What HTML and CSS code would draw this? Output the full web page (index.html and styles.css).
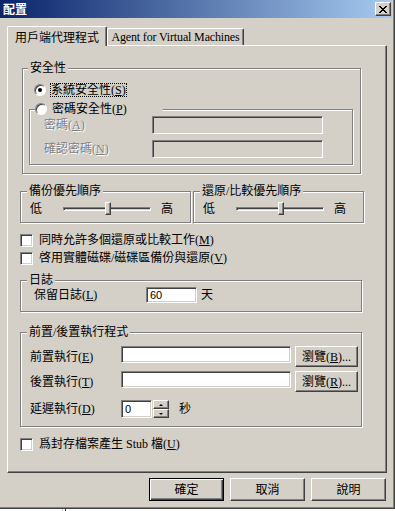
FILE: index.html
```html
<!DOCTYPE html>
<html lang="zh-Hant">
<head>
    <meta charset="UTF-8">
    <title>配置</title>
    <link rel="stylesheet" href="styles.css">
</head>
<body>
<div class="window">
    <div class="titlebar">
        <span class="title">配置</span>
        <span class="close">
            <svg width="8" height="7" viewBox="0 0 8 7"><path d="M0 0h2v1H0zM6 0h2v1H6zM1 1h2v1H1zM5 1h2v1H5zM2 2h4v1H2zM3 3h2v1H3zM2 4h4v1H2zM1 5h2v1H1zM5 5h2v1H5zM0 6h2v1H0zM6 6h2v1H6z" fill="#000"/></svg>
        </span>
    </div>

    <div class="tabs">
        <div class="tab active">用戶端代理程式</div>
        <div class="tab latin">Agent for Virtual Machines</div>
    </div>

    <div class="panel">
        <div class="group security">
            <div class="group-title">安全性</div>
            <div class="radio-row first">
                <span class="radio checked"></span>
                <span class="focus">系統安全性(<u>S</u>)</span>
            </div>
            <div class="group subgroup">
                <div class="radio-row legend">
                    <span class="radio"></span>
                    <span class="radio-text">密碼安全性(<u>P</u>)</span>
                </div>
                <div class="field-row">
                    <span class="field-label disabled">密碼(<u>A</u>)</span>
                    <span class="textbox off"></span>
                </div>
                <div class="field-row second">
                    <span class="field-label disabled">確認密碼(<u>N</u>)</span>
                    <span class="textbox off"></span>
                </div>
            </div>
        </div>

        <div class="priority-row">
            <div class="group priority">
                <div class="group-title">備份優先順序</div>
                <div class="slider-row">
                    <span>低</span>
                    <span class="track"><span class="thumb"></span></span>
                    <span class="high">高</span>
                </div>
            </div>
            <div class="group priority">
                <div class="group-title">還原/比較優先順序</div>
                <div class="slider-row">
                    <span>低</span>
                    <span class="track"><span class="thumb"></span></span>
                    <span class="high">高</span>
                </div>
            </div>
        </div>

        <div class="check-row cb-first">
            <span class="checkbox"></span>
            <span class="check-text">同時允許多個還原或比較工作(<u>M</u>)</span>
        </div>
        <div class="check-row cb-second">
            <span class="checkbox"></span>
            <span class="check-text">啓用實體磁碟/磁碟區備份與還原(<u>V</u>)</span>
        </div>

        <div class="group log">
            <div class="group-title">日誌</div>
            <div class="log-row">
                <span class="log-label">保留日誌(<u>L</u>)</span>
                <span class="textbox days">60</span>
                <span class="unit">天</span>
            </div>
        </div>

        <div class="group exec">
            <div class="group-title">前置/後置執行程式</div>
            <div class="exec-row">
                <span class="exec-label">前置執行(<u>E</u>)</span>
                <span class="textbox path"></span>
                <span class="button browse">瀏覽(<u>B</u>)...</span>
            </div>
            <div class="exec-row second">
                <span class="exec-label">後置執行(<u>T</u>)</span>
                <span class="textbox path"></span>
                <span class="button browse">瀏覽(<u>R</u>)...</span>
            </div>
            <div class="exec-row delay">
                <span class="exec-label">延遲執行(<u>D</u>)</span>
                <span class="textbox seconds">0</span>
                <span class="spinner">
                    <span class="spin up"></span>
                    <span class="spin down"></span>
                </span>
                <span class="unit sec">秒</span>
            </div>
        </div>

        <div class="check-row cb-stub">
            <span class="checkbox"></span>
            <span class="check-text">爲封存檔案產生 Stub 檔(<u>U</u>)</span>
        </div>
    </div>

    <div class="buttons">
        <span class="button default">確定</span>
        <span class="button">取消</span>
        <span class="button">說明</span>
    </div>
</div>
<div class="below"><span class="mark"></span></div>
</body>
</html>
```

FILE: styles.css
```css
body {
    margin: 0;
    background: #fff;
    font: 12px/14px "Liberation Serif", "Noto Sans CJK TC", serif;
    color: #000;
    overflow: hidden;
}
u {
    text-decoration: underline;
    text-underline-offset: 1px;
}

/* ventana */
.window {
    width: 395px;
    height: 509px;
    box-sizing: border-box;
    background: #d4d0c8;
    border-right: 1px solid #404040;
    border-bottom: 1px solid #404040;
    box-shadow: inset -1px -1px #808080;
}
.titlebar {
    width: 392px;
    height: 18px;
    box-sizing: border-box;
    padding-left: 3px;
    display: flex;
    align-items: center;
    justify-content: space-between;
    background: linear-gradient(to right, #0a246a, #a6caf0);
}
.title {
    color: #fff;
    font-weight: bold;
    font-family: "Noto Sans CJK TC", sans-serif;
    height: 14px;
}
.close {
    width: 16px;
    height: 14px;
    box-sizing: border-box;
    margin-right: 1px;
    display: flex;
    align-items: center;
    justify-content: center;
    background: #d4d0c8;
    border: 1px solid;
    border-color: #fff #404040 #404040 #fff;
    box-shadow: inset -1px -1px #808080;
}

/* pestañas */
.tabs {
    display: flex;
    align-items: flex-end;
    margin: 8px 0 0 7px;
    height: 20px;
}
.tab {
    box-sizing: border-box;
    background: #d4d0c8;
    border-top: 1px solid #fff;
    border-left: 1px solid #fff;
    border-right: 1px solid #404040;
    box-shadow: inset -1px 0 #808080;
    border-radius: 2px 2px 0 0;
    text-align: center;
    white-space: nowrap;
    width: 137px;
    height: 17px;
    margin-bottom: 1px;
    padding-top: 1px;
}
.tab.latin {
    letter-spacing: -0.15px;
}
.tab.active {
    width: 100px;
    height: 20px;
    margin-bottom: 0;
    padding-top: 4px;
    position: relative;
    z-index: 1;
}
.panel {
    margin: -1px 0 0 7px;
    width: 380px;
    height: 428px;
    box-sizing: border-box;
    padding-left: 12px;
    border-top: 1px solid #fff;
    border-left: 1px solid #fff;
    border-right: 1px solid #404040;
    border-bottom: 1px solid #404040;
    box-shadow: inset -1px -1px #808080;
    overflow: hidden;
}

/* grupos */
.group {
    box-sizing: border-box;
    border: 1px solid #808080;
    box-shadow: inset 1px 1px #fff, 1px 1px #fff;
}
.group-title {
    width: fit-content;
    height: 14px;
    margin: -8px 0 0 6px;
    padding: 0 2px;
    background: #d4d0c8;
    white-space: nowrap;
}
.security {
    margin: 22px 0 0 2px;
    width: 339px;
    height: 106px;
}
.security > .group-title {
    margin-left: 5px;
}
.radio-row {
    display: flex;
    align-items: center;
    height: 14px;
    white-space: nowrap;
}
.radio-row.first {
    margin: 8px 0 0 11px;
}
.radio {
    width: 12px;
    height: 12px;
    box-sizing: border-box;
    border-radius: 50%;
    background: #fff;
    border: 1px solid;
    border-color: #808080 #fff #fff #808080;
    box-shadow: inset 1px 1px #404040;
    display: flex;
    align-items: center;
    justify-content: center;
}
.radio.checked::after {
    content: "";
    width: 4px;
    height: 4px;
    border-radius: 50%;
    background: #000;
}
.focus {
    margin-left: 4px;
    line-height: 12px;
    border: 1px dotted #000;
}
.subgroup {
    margin: 12px 0 0 6px;
    width: 324px;
    height: 56px;
}
.radio-row.legend {
    width: 128px;
    margin: -8px 0 0 5px;
    background: #d4d0c8;
}
.radio-text {
    margin-left: 5px;
}
.field-row {
    display: flex;
    align-items: center;
    height: 18px;
    margin-left: 14px;
}
.field-row.second {
    margin-top: 6px;
}
.field-label {
    width: 108px;
    white-space: nowrap;
}
.disabled {
    color: #808080;
    text-shadow: 1px 1px #fff;
}

/* cuadros de texto */
.textbox {
    display: block;
    box-sizing: border-box;
    background: #fff;
    border: 1px solid;
    border-color: #808080 #fff #fff #808080;
    box-shadow: inset 1px 1px #404040, inset -1px -1px #d4d0c8;
    font: 11px/14px "Liberation Sans", sans-serif;
    padding: 1px 0 0 3px;
}
.textbox.off {
    width: 171px;
    height: 18px;
    background: #d4d0c8;
}

/* prioridades */
.priority-row {
    display: flex;
    margin-top: 17px;
}
.priority {
    width: 171px;
    height: 32px;
}
.priority + .priority {
    margin-left: 2px;
}
.slider-row {
    display: flex;
    align-items: center;
    height: 16px;
    margin-top: 3px;
    padding-left: 9px;
}
.track {
    position: relative;
    width: 88px;
    height: 4px;
    box-sizing: border-box;
    margin-left: 21px;
    border: 1px solid;
    border-color: #808080 #fff #fff #808080;
    box-shadow: inset 1px 1px #404040;
}
.thumb {
    position: absolute;
    left: 41px;
    top: -6px;
    width: 6px;
    height: 13px;
    box-sizing: border-box;
    background: #d4d0c8;
    border: 1px solid;
    border-color: #fff #404040 #404040 #fff;
    box-shadow: inset -1px -1px #808080;
}
.high {
    margin-left: 10px;
}

/* casillas */
.check-row {
    display: flex;
    align-items: center;
    height: 14px;
    white-space: nowrap;
}
.cb-first {
    margin-top: 10px;
}
.cb-second {
    margin-top: 4px;
}
.cb-stub {
    margin-top: 10px;
}
.checkbox {
    width: 13px;
    height: 13px;
    box-sizing: border-box;
    background: #fff;
    border: 1px solid;
    border-color: #808080 #fff #fff #808080;
    box-shadow: inset 1px 1px #404040, inset -1px -1px #d4d0c8;
}
.check-text {
    margin-left: 6px;
}

/* registro */
.log {
    margin-top: 15px;
    width: 342px;
    height: 32px;
}
.log-row {
    display: flex;
    align-items: center;
    height: 16px;
    padding-left: 13px;
}
.log-label {
    width: 112px;
    white-space: nowrap;
}
.textbox.days {
    width: 51px;
    height: 16px;
    padding-top: 0;
}
.unit {
    margin-left: 4px;
}

/* pre/post */
.exec {
    margin-top: 20px;
    width: 342px;
    height: 95px;
}
.exec-row {
    display: flex;
    align-items: flex-start;
    height: 21px;
    margin-top: 7px;
    padding-left: 9px;
}
.exec-row.second {
    margin-top: 4px;
}
.exec-row.delay {
    margin-top: 8px;
    height: 18px;
    align-items: center;
}
.exec-label {
    width: 91px;
    align-self: center;
    white-space: nowrap;
}
.textbox.path {
    width: 170px;
    height: 17px;
}
.exec-row:first-of-type .textbox.path {
    margin-top: 1px;
}
.textbox.seconds {
    width: 31px;
    height: 18px;
}
.spinner {
    display: flex;
    flex-direction: column;
    margin-left: 1px;
}
.spin {
    width: 16px;
    height: 9px;
    box-sizing: border-box;
    background: #d4d0c8;
    border: 1px solid;
    border-color: #fff #404040 #404040 #fff;
    box-shadow: inset -1px -1px #808080;
    display: flex;
    align-items: center;
    justify-content: center;
}
.spin::after {
    content: "";
    border-left: 2px solid transparent;
    border-right: 2px solid transparent;
}
.spin.up::after {
    border-bottom: 2px solid #000;
}
.spin.down::after {
    border-top: 2px solid #000;
}
.unit.sec {
    margin-left: 10px;
}

/* botones */
.button {
    display: flex;
    align-items: center;
    justify-content: center;
    box-sizing: border-box;
    width: 75px;
    height: 23px;
    background: #d4d0c8;
    border: 1px solid;
    border-color: #fff #404040 #404040 #fff;
    box-shadow: inset -1px -1px #808080;
    white-space: nowrap;
}
.button.browse {
    width: 63px;
    height: 21px;
    margin-left: 4px;
}
.button.default {
    border-color: #000;
    box-shadow: inset 1px 1px #fff, inset -1px -1px #404040, inset -2px -2px #808080;
}
.buttons {
    display: flex;
    gap: 6px;
    margin: 5px 0 0 149px;
}
.below {
    height: 2px;
}
.mark {
    display: block;
    margin-left: 62px;
    width: 2px;
    height: 2px;
    border-left: 1px solid #d4d0c8;
    border-right: 1px solid #404040;
}
```
